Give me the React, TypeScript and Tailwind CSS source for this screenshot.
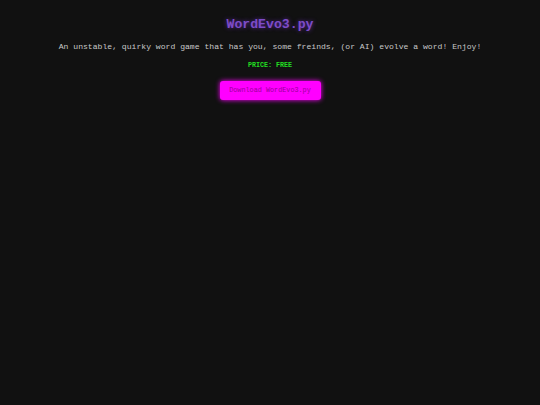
import React from 'react';

const App: React.FC = () => {
  return (
    <div className="min-h-screen bg-[#111111] text-[#cccccc] font-['Liberation_Mono','Courier_New',monospace]">
      <div className="flex flex-col items-center pt-[16px]">
        {/* Title */}
        <h1 className="text-[13.2px] leading-[17px] font-bold text-[#7d4cc9] [text-shadow:0_0_4px_#5a2a9a]">
          WordEvo3.py
        </h1>

        {/* Description */}
        <p className="mt-[8px] text-[8.1px] leading-[11px] text-[#c8c8c8]">
          An unstable, quirky word game that has you, some freinds, (or AI) evolve a word! Enjoy!
        </p>

        {/* Price */}
        <p className="mt-[9px] text-[6.7px] leading-[9px] font-bold text-[#22dd22]">
          PRICE: FREE
        </p>

        {/* Download button */}
        <button className="mt-[11px] w-[101px] h-[19px] rounded-[3px] bg-[#ff00ff] text-[6.8px] text-[#9a009a] shadow-[0_0_5px_#ff00ff] flex items-center justify-center">
          Download WordEvo3.py
        </button>
      </div>
    </div>
  );
};

export default App;
